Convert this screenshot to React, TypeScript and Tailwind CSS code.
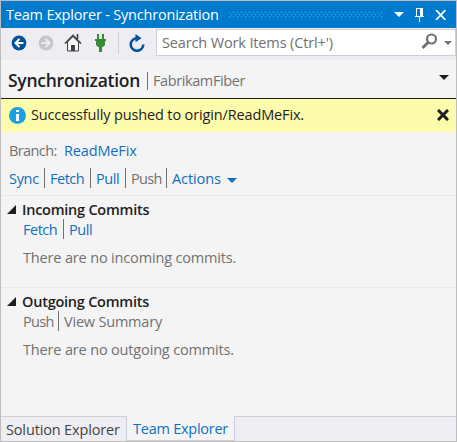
import React from "react";

function Divider() {
  return <span className="h-5 w-px shrink-0 bg-[#717171]" />;
}

function TitleBar() {
  return (
    <header className="flex h-[27px] items-center bg-[#007acc] pl-[5px] text-white">
      <h1 className="w-[223px] shrink-0 tracking-[-0.2px]">Team Explorer - Synchronization</h1>
      <svg width="154" height="7" className="mt-px shrink-0" shapeRendering="crispEdges">
        <defs>
          <pattern id="grip" width="4" height="4" patternUnits="userSpaceOnUse">
            <path d="M0 0h1v1H0zM2 2h1v1H2z" fill="#59a8de" />
          </pattern>
        </defs>
        <path d="M0 0h154v5H0z" fill="url(#grip)" />
      </svg>
      <svg width="10" height="5" className="ml-[11px] shrink-0"><path d="M0 0h10L5 5z" fill="#fff" /></svg>
      <svg width="10" height="14" className="ml-[11px] shrink-0" shapeRendering="crispEdges" fill="#fff">
        <path d="M1 0h7v1H1zM1 0h1v8H1zM5 0h3v8H5zM0 8h9v1H0zM4 9h1v5H4z" />
      </svg>
      <svg width="12" height="10" className="ml-[10px] shrink-0"><path d="M1 0l9.5 10M10.500 0L1 10" stroke="#fff" strokeWidth="1.8" /></svg>
    </header>
  );
}

function Toolbar() {
  return (
    <div className="flex h-8 items-start bg-[#eeeef2] pl-[10px]">
      <svg width="16" height="16" className="mt-[7px] shrink-0" fill="none">
        <circle cx="8" cy="8" r="7.4" fill="#00539c" />
        <path d="M12.500 8H5M8.500 4L4.500 8l4 4" stroke="#fff" strokeWidth="2" />
      </svg>
      <svg width="16" height="16" className="ml-[11px] mt-[7px] shrink-0" fill="none">
        <circle cx="8" cy="8" r="7.4" fill="#c6c6c8" />
        <path d="M3.500 8H11M7.500 4l4 4-4 4" stroke="#eeeef2" strokeWidth="2" />
      </svg>
      <svg width="18" height="19" className="ml-[10px] mt-[5px] shrink-0" fill="none">
        <path d="M3.500 9v9h11V9L9 3.500z" fill="#f4f4f4" stroke="#424242" />
        <path d="M1 10.500L9 2.500l8 8M13.500 1v5" stroke="#424242" strokeWidth="1.6" />
        <path d="M7 12h4v6H7z" fill="#424242" />
      </svg>
      <svg width="11" height="18" className="ml-[13px] mt-[6px] shrink-0" fill="#388a34">
        <path d="M2 0h2v5H2zM7 0h2v5H7zM0 5h11v2H0zM1 7h9v4l-2 2H7v5H4v-5H3l-2-2z" />
      </svg>
      <span className="ml-[12px] mt-1 h-[22px] w-px shrink-0 bg-[#cccedb]" />
      <svg width="17" height="18" className="ml-[10px] mt-[6px] shrink-0" fill="none">
        <path d="M8 4.200A6.300 6.300 0 1 0 14.300 10.500" stroke="#00539c" strokeWidth="2.600" />
        <path d="M6.500 0l6 4.200-6 4z" fill="#00539c" />
      </svg>
      <div className="ml-[10px] mt-px flex h-[27px] w-[300px] shrink-0 items-center border border-[#cccedb] bg-white pl-[5px]">
        <span className="mt-px w-[259px] shrink-0 tracking-[-0.14px]">Search Work Items (Ctrl+')</span>
        <svg width="17" height="17" className="mt-[-2px] shrink-0" fill="none" stroke="#717171">
          <circle cx="10.500" cy="6" r="4.500" strokeWidth="2.200" />
          <path d="M7.500 9L1.500 15" strokeWidth="3" />
        </svg>
        <svg width="8" height="4" className="ml-[6px] shrink-0"><path d="M0 0h8L4 4z" fill="#717171" /></svg>
      </div>
    </div>
  );
}

function Section({ title, links, message, className }: { title: string; links: React.ReactNode; message: string; className: string }) {
  return (
    <section className={`border-t border-[#eaeaed] pl-[6px] ${className}`}>
      <div className="flex h-[23px] items-center pt-[5px]">
        <svg width="9" height="9" className="mb-[2px] mr-[6px]"><path d="M9 0v9H0z" fill="#1e1e1e" /></svg>
        <h3 className="font-semibold tracking-[-0.24px] text-[#1e1e1e]">{title}</h3>
      </div>
      <div className="flex h-5 pl-[16px]">{links}</div>
      <p className="mt-[9px] pl-[16px] tracking-[-0.16px]">{message}</p>
    </section>
  );
}

export default function App() {
  return (
    <main className="flex h-[442px] w-[457px] flex-col overflow-hidden whitespace-nowrap border border-[#bdbdbd] bg-[#f4f4f4] text-[14.5px] leading-5 text-[#717171] [font-family:'Open_Sans','Noto_Sans',sans-serif]">
      <TitleBar />
      <Toolbar />
      <div className="flex h-[39px] items-center border-b border-[#1e1e1e] pl-[7px]">
        <h2 className="mt-px w-[139px] shrink-0 text-[17.5px] font-semibold tracking-[-0.28px] text-[#1e1e1e]">Synchronization</h2>
        <span className="mt-[4px] h-[18px] w-px shrink-0 bg-[#717171]" />
        <span className="ml-[5px] mt-[4px] w-[286px] shrink-0 tracking-[-0.4px]">FabrikamFiber</span>
        <svg width="10" height="5" className="mb-[3px] shrink-0"><path d="M0 0h10L5 5z" fill="#1e1e1e" /></svg>
      </div>
      <div className="flex h-[33px] items-center bg-[#fdfbac] pl-[8px] text-[#1e1e1e]">
        <svg width="17" height="17" className="mb-px shrink-0"><circle cx="8.500" cy="8.500" r="8.500" fill="#1ba1e2" /><path d="M7 3h3v2H7zM7 7h3v7H7z" fill="#fff" /></svg>
        <span className="mb-px ml-[5px] w-[406px] shrink-0 tracking-[-0.14px]">Successfully pushed to origin/ReadMeFix.</span>
        <svg width="12" height="12" className="mb-px shrink-0"><path d="M1 1l10 10M11 1L1 11" stroke="#1e1e1e" strokeWidth="3" /></svg>
      </div>
      <div className="h-[63px] pl-[8px] pt-[9px]">
        <div className="flex h-5 items-center">
          <span className="w-[55px] tracking-[-0.6px]">Branch:</span>
          <span className="tracking-[-0.15px] text-[#0e70c0]">ReadMeFix</span>
        </div>
        <div className="mt-[7px] flex h-5 text-[#0e70c0]">
          <span className="w-[35px] pt-px tracking-[-0.3px]">Sync</span><Divider />
          <span className="ml-[5px] w-[40px] pt-px tracking-[-0.5px]">Fetch</span><Divider />
          <span className="ml-[5px] w-[29px] pt-px tracking-[-0.4px]">Pull</span><Divider />
          <span className="ml-[5px] w-[35px] pt-px tracking-[-0.7px] text-[#717171]">Push</span><Divider />
          <span className="ml-[5px] w-[55px] pt-px tracking-[-0.1px]">Actions</span>
          <svg width="10" height="5" className="mt-[10px]"><path d="M0 0h10L5 5z" fill="#0e70c0" /></svg>
        </div>
      </div>
      <Section
        className="h-[92px]"
        title="Incoming Commits"
        message="There are no incoming commits."
        links={
          <>
            <span className="w-[40px] pt-px tracking-[-0.5px] text-[#0e70c0]">Fetch</span>
            <Divider />
            <span className="ml-[5px] pt-px tracking-[-0.4px] text-[#0e70c0]">Pull</span>
          </>
        }
      />
      <Section
        className="h-[129px]"
        title="Outgoing Commits"
        message="There are no outgoing commits."
        links={
          <>
            <span className="w-[35px] pt-px tracking-[-0.7px]">Push</span>
            <Divider />
            <span className="ml-[5px] pt-px tracking-[-0.2px]">View Summary</span>
          </>
        }
      />
      <nav className="flex h-[25px]">
        <span className="w-[126px] border-r border-t border-[#cccedb] bg-[#eeeef2] pl-[5px] pt-[3px] tracking-[-0.15px] text-[#444]">Solution Explorer</span>
        <span className="w-[107px] border-b border-[#cccedb] pl-[6px] pt-[3px] tracking-[-0.25px] text-[#0e70c0]">Team Explorer</span>
        <span className="flex-1 border-l border-t border-[#cccedb] bg-[#eeeef2]" />
      </nav>
    </main>
  );
}
